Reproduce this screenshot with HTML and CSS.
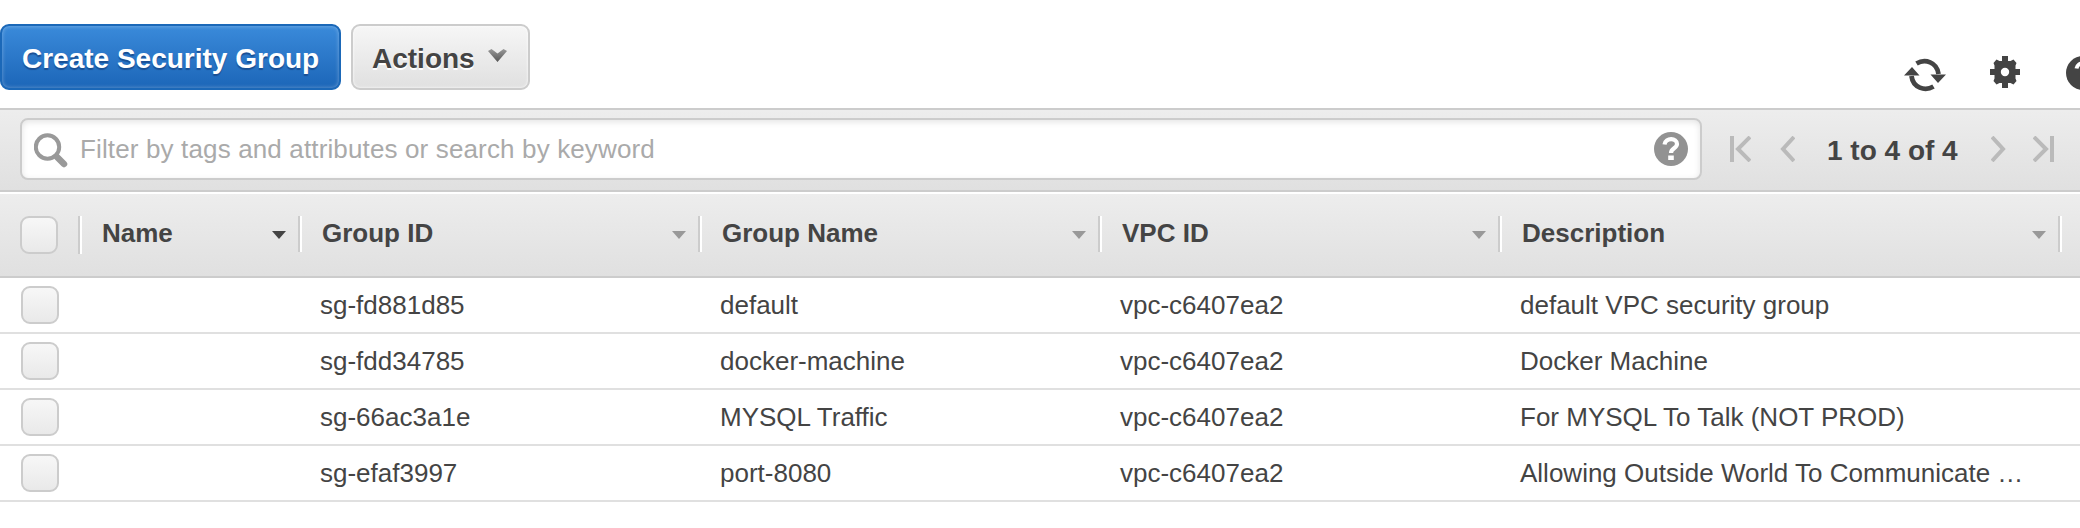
FILE: index.html
```html
<!DOCTYPE html>
<html lang="en">
<head>
<meta charset="utf-8">
<title>Security Groups</title>
<link rel="stylesheet" href="styles.css">
</head>
<body>
<header class="actions-bar">
  <button class="btn btn-primary"><span>Create Security Group</span></button>
  <button class="btn btn-menu"><span>Actions</span>
    <svg class="caret" width="19" height="13" viewBox="0 0 19 13"><defs><linearGradient id="cg" x2="0" y2="1"><stop offset="0" stop-color="#999"/><stop offset="1" stop-color="#555"/></linearGradient></defs><path fill="url(#cg)" d="M0 2 3.500 0l6 4.500L15.500 0 19 2l-9.500 11z"/></svg>
  </button>
  <div class="tools">
    <svg class="refresh" width="42" height="34" viewBox="0 0 42 34"><g fill="none" stroke="#444" stroke-width="4.800"><path d="M12.500 5.500C21 .500 33 4 34.500 16"/><path d="M29.500 28.500C21 33.500 9 30 7.500 18"/></g><path fill="#444" d="M26.500 16.500H42l-8 8.500zM0 17.500h15.500L8 9z"/></svg>
    <svg class="gear" width="30" height="32" viewBox="0 0 30 32"><path fill="#444" fill-rule="evenodd" d="M12 0h6v5h2.500l3-1.500L26.500 7 25.500 9.500V13H30v6h-4.500v3.500l1 2.500-3 3.500-3-1.500H18v5h-6v-5H9.500l-3 1.500-3-3.500 1-2.500V19H0v-6h4.500V9.500L3.500 7l3-3.500 3 1.500H12zM15 11.800a4.200 4.200 0 1 0 0 8.400 4.200 4.200 0 0 0 0-8.400z"/></svg>
    <svg class="help" width="14" height="34" viewBox="0 0 14 34"><circle cx="17" cy="17" r="17" fill="#444"/><path fill="none" stroke="#fff" stroke-width="4" d="M10.500 12.500c1-7 12.500-7 12.500-.500 0 4.500-6 4-6 9"/></svg>
  </div>
</header>
<section class="filter-bar">
  <label class="search">
    <svg class="mag" width="35" height="35" viewBox="0 0 35 35"><circle cx="13.500" cy="14" r="11.700" fill="none" stroke="#999" stroke-width="4"/><path stroke="#999" stroke-width="6.500" stroke-linecap="round" d="m23.500 24.500 6.500 6.500"/></svg>
    <span class="placeholder">Filter by tags and attributes or search by keyword</span>
    <svg class="qmark" width="34" height="34" viewBox="0 0 34 34"><circle cx="17" cy="17" r="17" fill="#929292"/><path fill="none" stroke="#fff" stroke-width="4.200" d="M10.500 12.500c1-7 12.500-7 12.500-.500 0 4.500-6 4-6 9"/><path fill="#fff" d="M14.200 23.500h5.600V28h-5.600z"/></svg>
  </label>
  <nav class="pager">
    <svg class="first" width="21" height="26" viewBox="0 0 21 26"><g fill="none" stroke="#bababa" stroke-width="4"><path d="M2 0v26M20 1 8 13l12 12"/></g></svg>
    <svg class="prev" width="15" height="26" viewBox="0 0 15 26"><path fill="none" stroke="#bababa" stroke-width="4" d="M14 1 3 13l11 12"/></svg>
    <span class="count">1 to 4 of 4</span>
    <svg class="next" width="15" height="26" viewBox="0 0 15 26"><path fill="none" stroke="#bababa" stroke-width="4" d="m1 1 11 12L1 25"/></svg>
    <svg class="last" width="21" height="26" viewBox="0 0 21 26"><g fill="none" stroke="#bababa" stroke-width="4"><path d="M19 0v26M1 1l12 12L1 25"/></g></svg>
  </nav>
</section>
<main class="grid">
  <div class="row head">
    <div class="cell pick"><i class="box"></i></div>
    <div class="cell"><span>Name</span><i class="sort active"></i></div>
    <div class="cell"><span>Group ID</span><i class="sort"></i></div>
    <div class="cell"><span>Group Name</span><i class="sort"></i></div>
    <div class="cell"><span>VPC ID</span><i class="sort"></i></div>
    <div class="cell"><span>Description</span><i class="sort"></i></div>
  </div>
  <div class="row"><div class="pick"><i class="box"></i></div><div></div><div>sg-fd881d85</div><div>default</div><div>vpc-c6407ea2</div><div>default VPC security group</div></div>
  <div class="row"><div class="pick"><i class="box"></i></div><div></div><div>sg-fdd34785</div><div>docker-machine</div><div>vpc-c6407ea2</div><div>Docker Machine</div></div>
  <div class="row"><div class="pick"><i class="box"></i></div><div></div><div>sg-66ac3a1e</div><div>MYSQL Traffic</div><div>vpc-c6407ea2</div><div>For MYSQL To Talk (NOT PROD)</div></div>
  <div class="row"><div class="pick"><i class="box"></i></div><div></div><div>sg-efaf3997</div><div>port-8080</div><div>vpc-c6407ea2</div><div>Allowing Outside World To Communicate …</div></div>
</main>
</body>
</html>
```
FILE: styles.css
```css
* { box-sizing: border-box; }
body { margin: 0; background: #fff; color: #444; font: 26px/30px "Liberation Sans", Arial, sans-serif; overflow: hidden; }
svg { display: block; flex: none; }
.actions-bar { display: flex; height: 108px; padding-top: 24px; gap: 10px; }
.btn { display: flex; align-items: center; height: 66px; border: 2px solid #ccc; border-radius: 9px; font: bold 28px/32px "Liberation Sans", Arial, sans-serif; white-space: nowrap; padding: 3px 0 0 20px; }
.btn-primary { width: 341px; color: #fff; border-color: #1b68b8; background: linear-gradient(#3a8ada, #1c66b8); box-shadow: inset 0 0 4px rgba(255,255,255,.35); text-shadow: 0 2px 1px #1a4f94; }
.btn-menu { width: 179px; padding-left: 19px; color: #444; background: linear-gradient(#f6f6f6, #e0e0e0); box-shadow: inset 0 0 3px #fff; text-shadow: 0 2px 0 #fff; }
.caret { margin: -7px 0 0 13px; }
.tools { display: flex; align-items: flex-start; margin-left: auto; }
.refresh { margin: 34px 44px 0 0; }
.gear { margin: 32px 46px 0 0; }
.help { margin-top: 32px; }
.filter-bar { display: flex; height: 84px; padding: 8px 0 0 20px; border: solid #ccc; border-width: 2px 0; background: linear-gradient(#ededed, #e0e0e0); }
.search { display: flex; align-items: center; width: 1682px; height: 62px; padding: 0 12px; border: 2px solid #ccc; border-radius: 8px; background: #fff; box-shadow: inset 0 2px 6px #e4e4e4; }
.mag { margin-top: 3px; }
.placeholder { margin-left: 11px; color: #aaa; letter-spacing: .14px; white-space: nowrap; }
.qmark { margin-left: auto; }
.pager { display: flex; align-items: center; height: 62px; padding-left: 28px; }
.prev { margin-left: 29px; }
.count { width: 132px; margin: 3px 32px 0 32px; font-weight: bold; font-size: 28px; white-space: nowrap; }
.last { margin-left: 27px; }
.grid { margin-top: 2px; }
.row { display: grid; grid-template-columns: 78px 220px 400px 400px 400px 560px 1fr; height: 56px; border-bottom: 2px solid #e0e0e0; align-items: center; white-space: nowrap; }
.row > div { padding-left: 22px; }
.row > .pick { padding-left: 21px; }
.box { display: block; width: 38px; height: 38px; border: 2px solid #ccc; border-radius: 9px; background: linear-gradient(#f7f7f7, #e9e9e9); }
.head { height: 84px; border-color: #ccc; background: linear-gradient(#ededed, #e0e0e0); font-weight: bold; align-items: start; padding-top: 22px; }
.head > .cell { display: flex; height: 36px; padding: 2px 12px 0 24px; border-right: 2px solid #ccc; box-shadow: 2px 0 #fff; }
.head > .pick { width: 80px; height: 38px; padding: 0 0 0 20px; }
.head > .cell:not(.pick) { width: calc(100% + 2px); }
.sort { width: 14px; height: 8px; margin: 13px 0 0 auto; background: #999; clip-path: polygon(0 0, 100% 0, 50% 100%); }
.active { background: #444; }
```
